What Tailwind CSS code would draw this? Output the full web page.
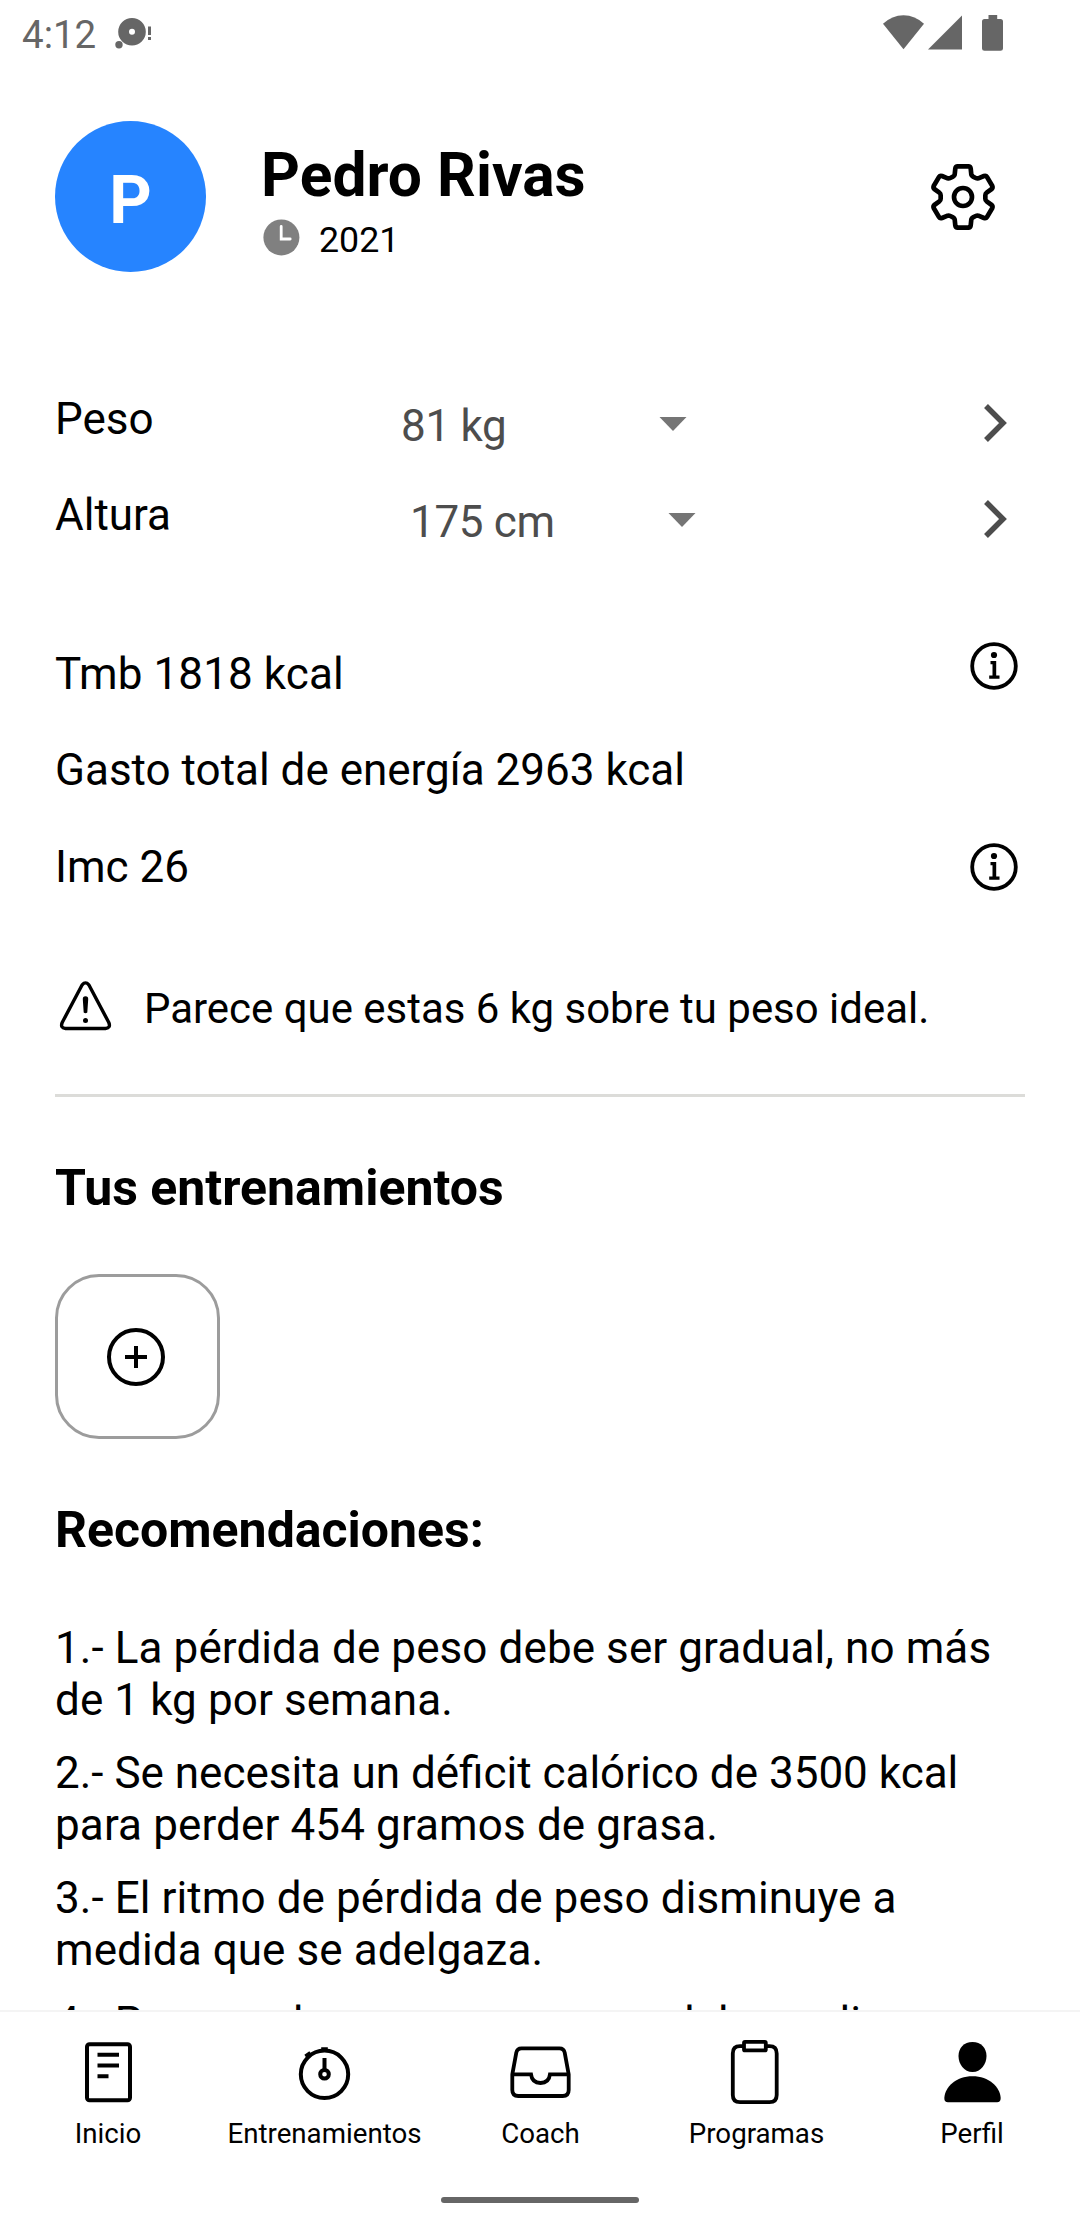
<!DOCTYPE html>
<html lang="es">
<head>
<meta charset="utf-8">
<title>Perfil</title>
<script src="https://cdn.jsdelivr.net/npm/@tailwindcss/browser@4"></script>
</head>
<body class="flex h-[2220px] w-[1080px] flex-col overflow-hidden bg-white font-['Roboto',sans-serif] text-black">

<!-- Status bar -->
<header class="flex h-[66px] shrink-0 items-start pt-[15px] pl-[22px] text-[#666]">
  <span class="w-[92px] text-[38.5px] leading-[40px]">4:12</span>
  <svg class="h-[34px] w-[40px]" viewBox="114 15 40 34" fill="currentColor"><path fill-rule="evenodd" d="M132 18a13.8 13.8 0 1 0 0 27.600a13.800 13.800 0 1 0 0-27.600zM132 28.800a3 3 0 1 1 0 6a3 3 0 1 1 0-6z"/><circle cx="119" cy="44.700" r="3.700"/><path d="M148 26.500h3v8.500h-3zM148 37h3v3h-3z"/></svg>
  <svg class="mr-[76px] ml-auto h-[37px] w-[122px]" viewBox="882 15 122 37" fill="currentColor"><path d="M883 23.800Q892 15.200 903.500 15.200T924 23.800L903.500 49.200z"/><path d="M928 49.500L962 15.500v34z"/><path d="M988.500 15h8.700v4h3.300q2.500 0 2.500 2.500v27q0 2.300-2.500 2.300h-16q-2.500 0-2.500-2.300v-27q0-2.500 2.500-2.500h4z"/></svg>
</header>

<main class="flex min-h-0 flex-1 flex-col overflow-hidden px-[55px]">
  <!-- Profile -->
  <section class="flex h-[309px] shrink-0 items-start pt-[55px]">
    <div class="flex size-[151px] items-center justify-center rounded-full bg-[#2684ff] pt-2 text-[66px] leading-none font-bold text-white">P</div>
    <div class="ml-[55px] pt-[25px]">
      <h1 class="text-[60.5px] leading-[60px] font-bold tracking-[0.05px]">Pedro Rivas</h1>
      <div class="mt-[13px] ml-[2px] flex items-start">
        <svg class="size-[37px]" viewBox="0 0 37 37"><circle cx="18.400" cy="18.400" r="18" fill="#808080"/><path d="M18.200 7.500v12.500h9" fill="none" stroke="#fff" stroke-width="2.800" stroke-linecap="round"/></svg>
        <span class="ml-[19px] text-[35.75px] leading-[42px]">2021</span>
      </div>
    </div>
    <svg class="mt-[43px] mr-[29px] ml-auto size-[66px]" viewBox="210 492 198 198" fill="none" stroke="#000" stroke-width="14" stroke-linejoin="round"><path d="M293 499H325Q331 499 332 505L334 524Q335 528 339 530L347 534Q351 536 355 535L372 528Q378 526 381 531L397 558Q399 563 395 567L380 578Q376 581 376 586V596Q376 601 380 604L395 615Q399 619 397 624L381 651Q378 656 372 654L355 647Q351 646 347 648L339 652Q335 654 334 658L332 677Q331 683 325 683H293Q287 683 286 677L284 658Q283 654 279 652L271 648Q267 646 263 647L246 654Q240 656 237 651L221 624Q219 619 223 615L238 604Q242 601 242 596V586Q242 581 238 578L223 567Q219 563 221 558L237 531Q240 526 246 528L263 535Q267 536 271 534L279 530Q283 528 284 524L286 505Q287 499 293 499Z"/><circle cx="309" cy="591" r="27"/></svg>
  </section>

  <!-- Measurements -->
  <section class="shrink-0 text-[44px] leading-[52px]">
    <div class="flex h-24 items-center">
      <span class="w-[346px] pb-2">Peso</span>
      <span class="w-[258px] pt-1.5 tracking-[-0.3px] text-[#4d4d4d]">81 kg</span>
      <svg class="mt-0.5 h-[14px] w-[28px]" viewBox="0 0 28 14"><path d="M0.500 0h27L14 14z" fill="#757575"/></svg>
      <svg class="mr-[17px] ml-auto h-10 w-6" viewBox="0 0 24 40"><path d="M2 3L19 20L2 37" fill="none" stroke="#4d4d4d" stroke-width="5.500"/></svg>
    </div>
    <div class="flex h-24 items-center">
      <span class="w-[355px] pb-2">Altura</span>
      <span class="w-[258px] pt-1.5 tracking-[-0.35px] text-[#4d4d4d]">175 cm</span>
      <svg class="mt-0.5 h-[14px] w-[28px]" viewBox="0 0 28 14"><path d="M0.500 0h27L14 14z" fill="#757575"/></svg>
      <svg class="mr-[17px] ml-auto h-10 w-6" viewBox="0 0 24 40"><path d="M2 3L19 20L2 37" fill="none" stroke="#4d4d4d" stroke-width="5.500"/></svg>
    </div>
  </section>

  <!-- Energy figures -->
  <section class="mt-[59px] shrink-0 text-[44px] leading-[52px]">
    <div class="flex h-24 items-center justify-between">
      <span class="tracking-[0.1px]">Tmb 1818 kcal</span>
      <svg class="mr-[7px] mb-4 size-12" viewBox="0 0 48 48"><circle cx="24" cy="24" r="21.800" fill="none" stroke="#000" stroke-width="3.800"/><circle cx="24" cy="13" r="3.100"/><path d="M20.500 19h5.700v14.500h3.300v3.300h-10.300v-3.300h3.300v-11.300h-2z"/></svg>
    </div>
    <div class="flex h-24 items-center">Gasto total de energía 2963 kcal</div>
    <div class="flex h-[98px] items-center justify-between">
      <span>Imc 26</span>
      <svg class="mr-[7px] size-12" viewBox="0 0 48 48"><circle cx="24" cy="24" r="21.800" fill="none" stroke="#000" stroke-width="3.800"/><circle cx="24" cy="13" r="3.100"/><path d="M20.500 19h5.700v14.500h3.300v3.300h-10.300v-3.300h3.300v-11.300h-2z"/></svg>
    </div>
  </section>

  <!-- Ideal weight notice -->
  <div class="mt-[44px] flex h-24 shrink-0 items-center">
    <svg class="mb-1 ml-[4px] h-[50px] w-[53px]" viewBox="0 0 53 50"><path d="M23.200 3.800Q26.500 0 29.800 3.800L49.800 41.500Q52 47 46.500 47.500H6.500Q1 47 3.200 41.500Z" fill="none" stroke="#000" stroke-width="3.400" stroke-linejoin="round"/><path d="M26.500 15.200q2.900 0 2.700 3l-0.900 13.300q-1.800 1.600-3.600 0l-0.900-13.300q-0.200-3 2.700-3z"/><circle cx="26.500" cy="39.500" r="2.500"/></svg>
    <p class="ml-8 pt-0.5 text-[41.95px] leading-[52px] whitespace-nowrap">Parece que estas 6 kg sobre tu peso ideal.</p>
  </div>
  <div class="mt-[38px] h-[3px] shrink-0 bg-[#dcdcd9]"></div>

  <!-- Workouts -->
  <h2 class="mt-[61px] shrink-0 text-[50px] leading-[60px] font-bold">Tus entrenamientos</h2>
  <div class="mt-[56px] flex size-[165px] shrink-0 items-center justify-center rounded-[44px] border-[3px] border-[#9c9c9c]">
    <svg class="mr-[3px] size-[60px]" viewBox="0 0 60 60" fill="none" stroke="#000" stroke-width="4"><circle cx="30" cy="30" r="27"/><path d="M30 19v22M19 30h22"/></svg>
  </div>

  <!-- Recommendations -->
  <h2 class="mt-[61px] shrink-0 text-[50px] leading-[60px] font-bold">Recomendaciones:</h2>
  <div class="mt-[62px] flex shrink-0 flex-col gap-[21px] text-[44px] leading-[52px] whitespace-nowrap">
    <p class="tracking-[0.09px]">1.- La pérdida de peso debe ser gradual, no más<br>de 1 kg por semana.</p>
    <p>2.- Se necesita un déficit calórico de 3500 kcal<br><span class="tracking-[0.12px]">para perder 454 gramos de grasa.</span></p>
    <p class="tracking-[0.08px]">3.- El ritmo de pérdida de peso disminuye a<br>medida que se adelgaza.</p>
    <p class="tracking-[0.09px]">4.- Para perder peso y grasa se debe realizar</p>
  </div>
</main>

<!-- Bottom navigation -->
<nav class="grid h-[187px] shrink-0 grid-cols-5 border-t-[2px] border-[#f4f4f4] bg-white pt-[28px] text-[27.7px] leading-[33px]">
  <a class="flex flex-col items-center gap-[11px]">
    <svg class="h-[66px] w-[66px]" viewBox="75 2040 66 66" fill="none" stroke="#000" stroke-width="4"><rect x="87" y="2044.300" width="43" height="56" rx="2.500"/><path d="M97.500 2054.800H119M97.500 2065.600H119M97.500 2076.300H108.500"/></svg>
    <span>Inicio</span>
  </a>
  <a class="flex flex-col items-center gap-[11px]">
    <svg class="h-[66px] w-[66px]" viewBox="291 2040 66 66" fill="none" stroke="#000" stroke-width="4"><circle cx="324.500" cy="2074.300" r="23.700"/><circle cx="324.500" cy="2074.300" r="4.300"/><path d="M324.500 2058v11M321.200 2049.200h6.600M305.500 2056.500l5-3.500"/></svg>
    <span class="ml-px">Entrenamientos</span>
  </a>
  <a class="flex flex-col items-center gap-[11px]">
    <svg class="h-[66px] w-[66px]" viewBox="507 2040 66 66" fill="none" stroke="#000" stroke-width="3.800"><path d="M521.500 2048.400H559.500Q563.800 2048.400 564.700 2052.600L568.700 2074.300V2090Q568.700 2096 562.700 2096H518.300Q512.300 2096 512.300 2090V2074.300L516.300 2052.600Q517.200 2048.400 521.500 2048.400Z"/><path d="M512.300 2074.300H531Q532 2083 540.500 2083T550 2074.300H568.700"/></svg>
    <span class="ml-px">Coach</span>
  </a>
  <a class="flex flex-col items-center gap-[11px]">
    <svg class="ml-[-3px] h-[66px] w-[66px]" viewBox="721.500 2040 66 66" fill="none" stroke="#000" stroke-width="3.800"><path d="M743 2046.200H739.500Q732.300 2046.200 732.300 2053.400V2095Q732.300 2102.200 739.500 2102.200H769Q776.200 2102.200 776.200 2095V2053.400Q776.200 2046.200 769 2046.200H765.500"/><rect x="743.500" y="2041.900" width="21.800" height="8.500" rx="1"/></svg>
    <span class="ml-px">Programas</span>
  </a>
  <a class="flex flex-col items-center gap-[11px]">
    <svg class="h-[66px] w-[66px]" viewBox="939 2040 66 66"><path d="M972.500 2042C981 2042 986.500 2048 986.500 2056C986.500 2064 981 2072 972.500 2072S958.500 2064 958.500 2056C958.500 2048 964 2042 972.500 2042Z"/><path d="M972.500 2076.300C989 2076.300 1000 2087 1000.700 2098Q1000.700 2102.300 997 2102.300H948Q944.300 2102.300 944.300 2098C945 2087 956 2076.300 972.500 2076.300Z"/></svg>
    <span>Perfil</span>
  </a>
</nav>
<div class="flex h-[23px] shrink-0 justify-center"><div class="h-[6px] w-[198px] rounded-full bg-[#666]"></div></div>
</body>
</html>
